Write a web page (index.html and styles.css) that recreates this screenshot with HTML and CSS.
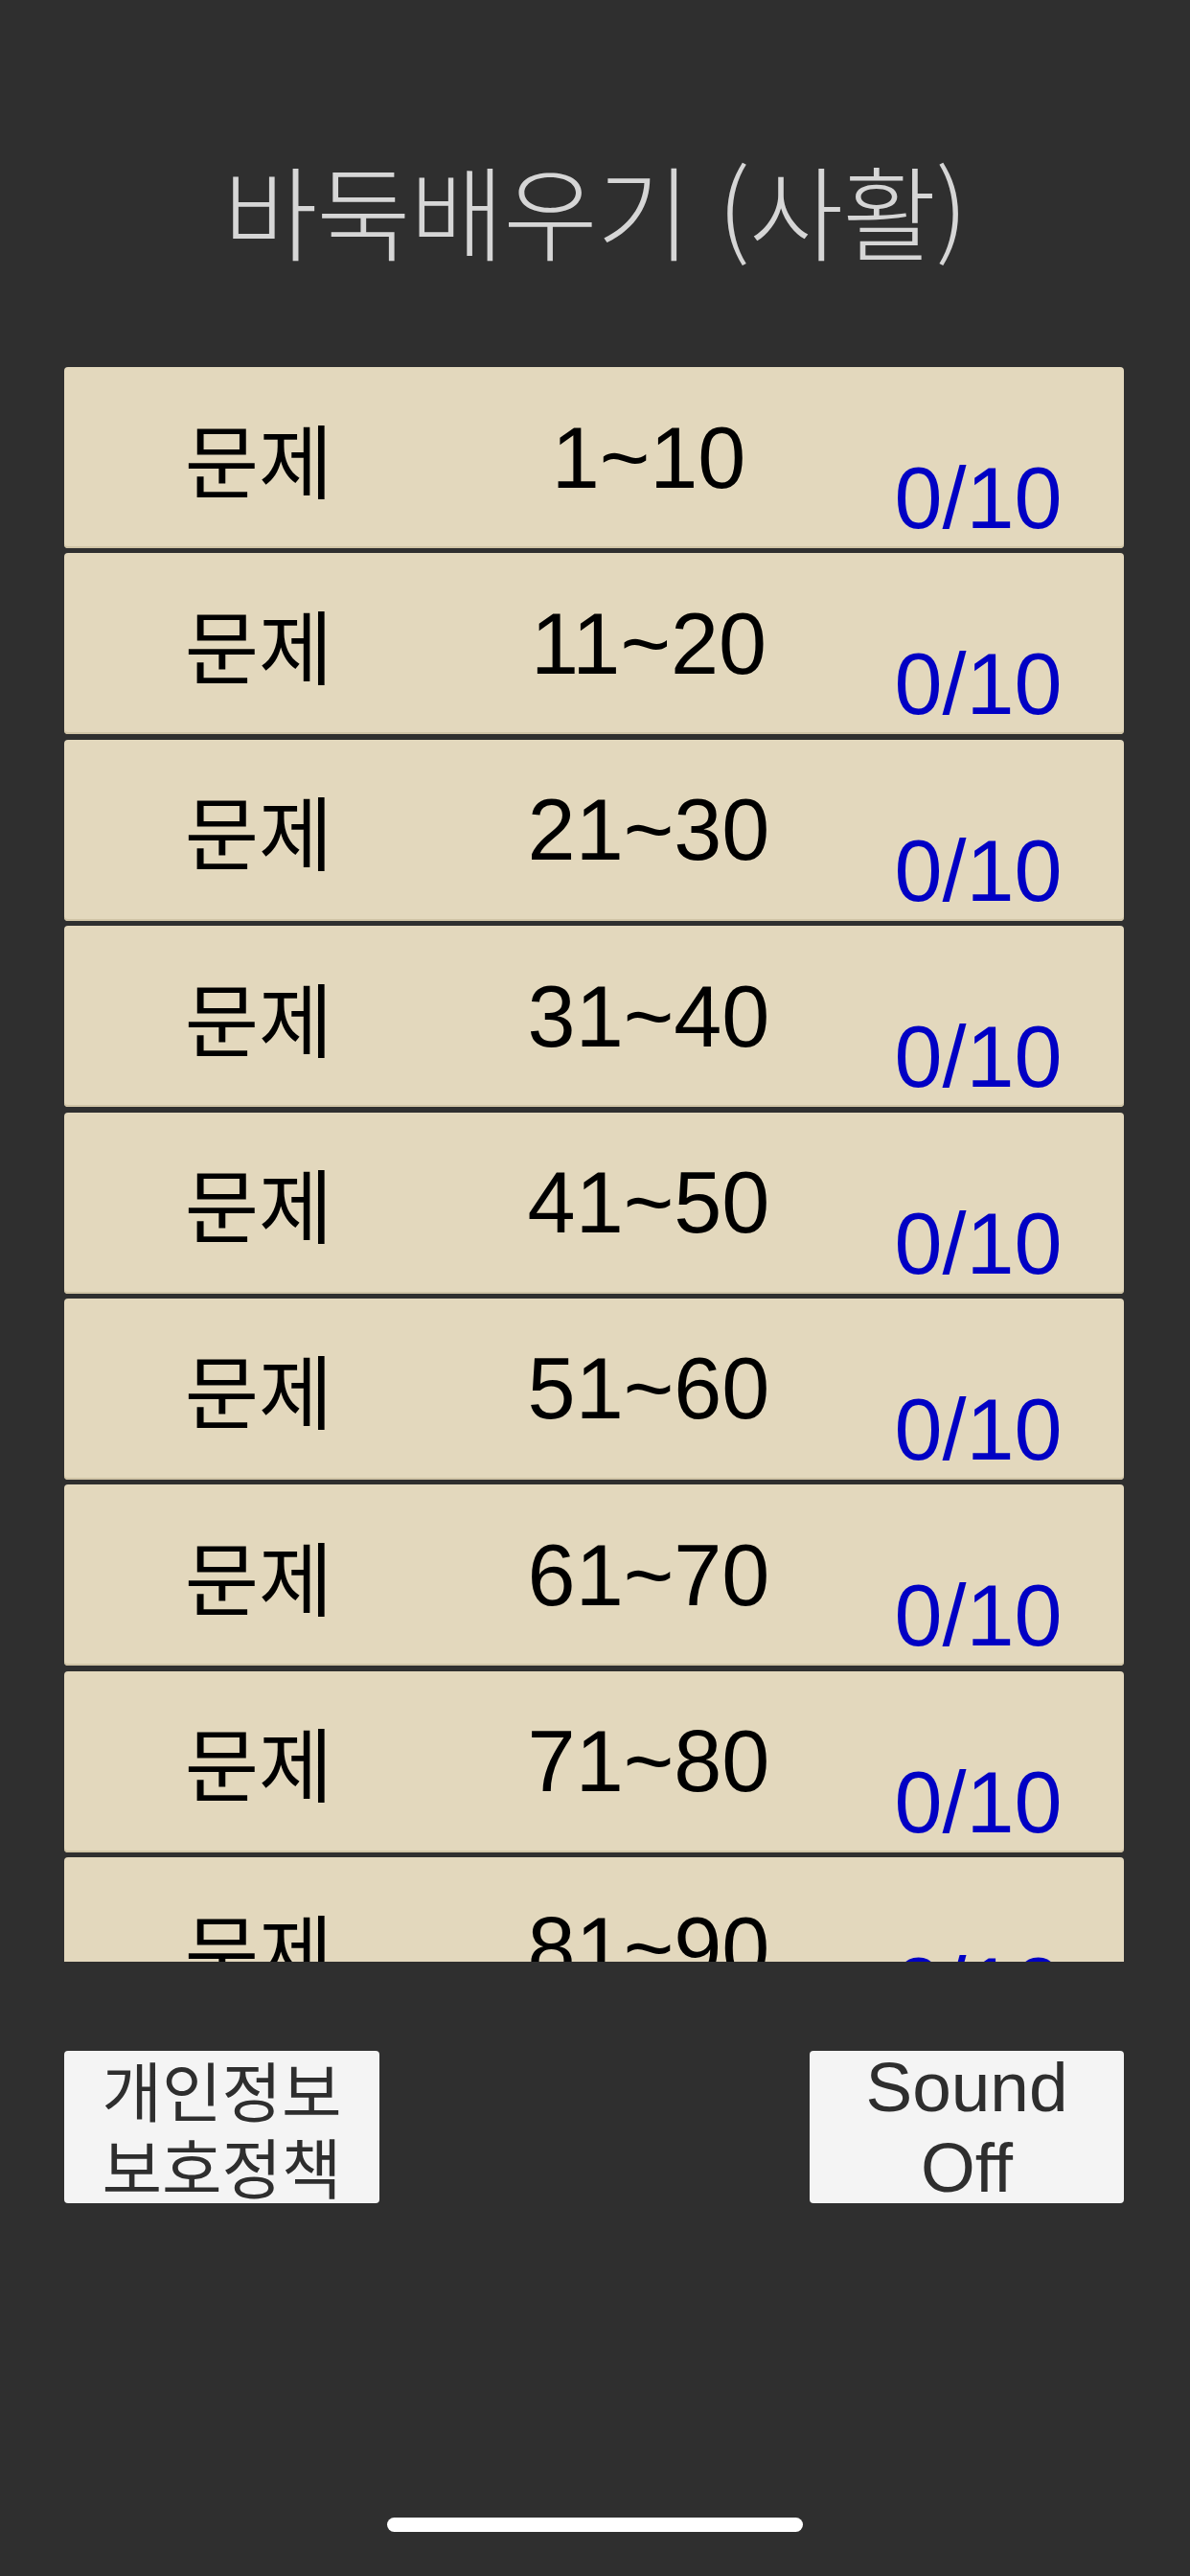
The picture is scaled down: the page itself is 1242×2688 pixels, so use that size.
FILE: index.html
```html
<!DOCTYPE html>
<html lang="ko">
<head>
<meta charset="utf-8">
<title>바둑배우기 (사활)</title>
<link rel="stylesheet" href="styles.css">
</head>
<body>
<div class="screen">
  <h1 class="title">바둑배우기 (사활)</h1>
  <div class="list">
    <div class="row"><span class="label">문제</span><span class="range">1~10</span><span class="count">0/10</span></div>
    <div class="row"><span class="label">문제</span><span class="range">11~20</span><span class="count">0/10</span></div>
    <div class="row"><span class="label">문제</span><span class="range">21~30</span><span class="count">0/10</span></div>
    <div class="row"><span class="label">문제</span><span class="range">31~40</span><span class="count">0/10</span></div>
    <div class="row"><span class="label">문제</span><span class="range">41~50</span><span class="count">0/10</span></div>
    <div class="row"><span class="label">문제</span><span class="range">51~60</span><span class="count">0/10</span></div>
    <div class="row"><span class="label">문제</span><span class="range">61~70</span><span class="count">0/10</span></div>
    <div class="row"><span class="label">문제</span><span class="range">71~80</span><span class="count">0/10</span></div>
    <div class="row"><span class="label">문제</span><span class="range">81~90</span><span class="count">0/10</span></div>
    <div class="row"><span class="label">문제</span><span class="range">91~100</span><span class="count">0/10</span></div>
  </div>
  <div class="buttons">
    <div class="btn btn-ko"><span class="line">개인정보</span><span class="line">보호정책</span></div>
    <div class="btn btn-en"><span class="line">Sound</span><span class="line">Off</span></div>
  </div>
  <div class="home-indicator"></div>
</div>
</body>
</html>
```
FILE: styles.css
```css
html, body {
  margin: 0;
  padding: 0;
  background: #2f2f2f;
}

.screen {
  width: 1242px;
  height: 2688px;
  background: #2f2f2f;
  display: flex;
  flex-direction: column;
  overflow: hidden;
}

.title {
  margin: 0;
  height: 383px;
  box-sizing: border-box;
  padding-top: 156px;
  text-align: center;
  font-family: "Noto Sans CJK KR", "Noto Sans", sans-serif;
  font-weight: 300;
  font-size: 107px;
  line-height: 124px;
  color: #d6d6d6;
  letter-spacing: -1px;
}

.list {
  margin: 0 69px 0 67px;
  height: 1664px;
  overflow: hidden;
  display: flex;
  flex-direction: column;
  gap: 5.4px;
}

.row {
  flex: 0 0 189px;
  height: 189px;
  background: #e3d8bd;
  border-radius: 4px;
  box-shadow: inset 0 -2px 0 #d0c4a6;
  display: grid;
  grid-template-columns: 406px 408px 280px;
  align-items: center;
  color: #000;
}

.label {
  text-align: center;
  font-family: "Noto Sans CJK KR", sans-serif;
  font-size: 84px;
  line-height: 1;
}

.range {
  text-align: center;
  font-family: "Liberation Sans", Arial, sans-serif;
  font-size: 90px;
  line-height: 1;
}

.count {
  align-self: end;
  padding-bottom: 7px;
  text-align: center;
  font-family: "Liberation Sans", Arial, sans-serif;
  font-size: 90px;
  line-height: 1;
  color: #0000c4;
}

.buttons {
  margin: 93px 69px 0 67px;
  display: flex;
  justify-content: space-between;
}

.btn {
  width: 329px;
  height: 159px;
  background: #f4f4f4;
  border-radius: 4px;
  color: #2e2e2e;
  display: flex;
  flex-direction: column;
  align-items: center;
  justify-content: center;
  text-align: center;
}

.line {
  display: block;
}

.btn-ko .line {
  font-family: "Noto Sans CJK KR", sans-serif;
  font-size: 68px;
  line-height: 80px;
  height: 80px;
}

.btn-en {
  width: 328px;
}

.btn-en .line {
  font-family: "Liberation Sans", Arial, sans-serif;
  font-size: 73px;
  line-height: 84px;
  height: 84px;
}

.home-indicator {
  margin: 328px auto 0;
  width: 434px;
  height: 15px;
  border-radius: 8px;
  background: #ffffff;
}
```
